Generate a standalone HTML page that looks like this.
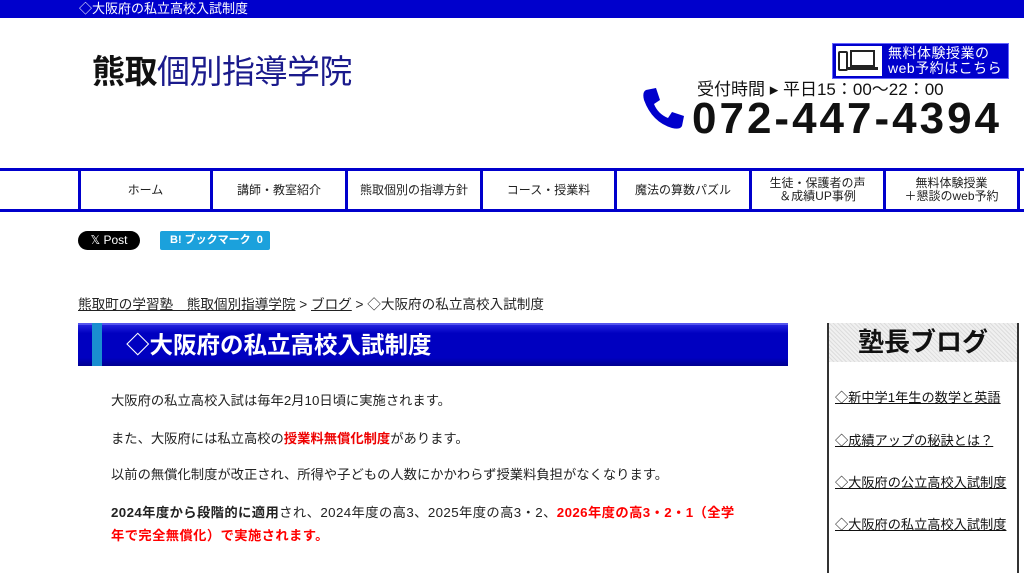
<!DOCTYPE html><html><head><meta charset="utf-8"><style>
*{margin:0;padding:0;box-sizing:border-box}
body{width:1024px;height:565px;overflow:hidden;background:#fff;font-family:"Liberation Sans","Noto Sans CJK JP",sans-serif;color:#222;position:relative}
.a{position:absolute}
.top{left:0;top:0;width:1024px;height:18px;background:#0000cc;color:#fff;font-size:13px;line-height:17px;padding-left:79px}
.nav{left:0;top:168px;width:1024px;height:44px;border-top:3px solid #0000cc;border-bottom:3px solid #0000cc}
.nav div{position:absolute;top:0;height:38px;border-left:3px solid #0000cc;font-size:12px;text-align:center;display:flex;align-items:center;justify-content:center;line-height:13px;color:#222}
p{position:absolute;left:111px;font-size:13.3px;white-space:nowrap}
.r{color:#f00;font-weight:bold}
.side a{position:absolute;left:6px;font-size:13.2px;color:#111;text-decoration:underline;white-space:nowrap}
</style></head><body>
<div class="a top">◇大阪府の私立高校入試制度</div>
<div class="a" style="left:92px;top:51px;font-size:33px;line-height:42px;letter-spacing:-0.5px"><b style="color:#111">熊取</b><span style="color:#1a1a8c">個別指導学院</span></div>
<div class="a" style="left:832px;top:43px;width:177px;height:36px;background:#0000cc;border:1px solid #66f"></div>
<div class="a" style="left:836px;top:46px;width:46px;height:30px;background:#fff"></div>
<svg class="a" style="left:836px;top:46px" width="46" height="30"><rect x="3" y="6" width="8" height="18" rx="1" fill="none" stroke="#222" stroke-width="2"/><rect x="15" y="5" width="23" height="15" fill="none" stroke="#222" stroke-width="2"/><rect x="12" y="21" width="30" height="3" fill="#222"/></svg>
<div class="a" style="left:888px;top:46px;color:#fff;font-size:14px;line-height:15px;letter-spacing:0.5px">無料体験授業の<br>web予約はこちら</div>
<div class="a" style="left:697px;top:80px;font-size:17px;line-height:20px;color:#111;letter-spacing:0px">受付時間 ▸ 平日15：00～22：00</div>
<svg class="a" style="left:640px;top:86px" width="48" height="46"><path d="M6 4 L16 2 L20 14 L14 18 Q18 28 28 32 L32 26 L44 30 L42 40 Q40 44 32 42 Q12 36 4 14 Q2 6 6 4Z" fill="#0000cc"/></svg>
<div class="a" style="left:692px;top:96px;font-size:44px;font-weight:bold;line-height:46px;color:#111;letter-spacing:3px">072-447-4394</div>
<div class="a nav">
<div style="left:78px;width:132px">ホーム</div>
<div style="left:210px;width:135px">講師・教室紹介</div>
<div style="left:345px;width:135px">熊取個別の指導方針</div>
<div style="left:480px;width:134px">コース・授業料</div>
<div style="left:614px;width:135px">魔法の算数パズル</div>
<div style="left:749px;width:134px">生徒・保護者の声<br>＆成績UP事例</div>
<div style="left:883px;width:134px">無料体験授業<br>＋懇談のweb予約</div>
<div style="left:1017px;width:10px"></div>
</div>
<div class="a" style="left:78px;top:231px;width:62px;height:19px;background:#000;border-radius:10px;color:#fff;font-size:12px;line-height:19px;text-align:center">𝕏 Post</div>
<div class="a" style="left:160px;top:231px;width:110px;height:19px;background:#1ba1dc;border-radius:2px;color:#fff;font-size:11px;font-weight:bold;line-height:19px;padding-left:10px">B! ブックマーク&nbsp; 0</div>
<div class="a" style="left:78px;top:293px;font-size:13.6px;color:#222"><u>熊取町の学習塾　熊取個別指導学院</u> &gt; <u>ブログ</u> &gt; ◇大阪府の私立高校入試制度</div>
<div class="a" style="left:78px;top:323px;width:710px;height:43px;background:linear-gradient(#2222dd,#0000c0 20%,#0000c0 80%,#000090);border-top:2px solid #5555ee"></div>
<div class="a" style="left:92px;top:323px;width:10px;height:43px;background:#1a8ed0"></div>
<div class="a" style="left:126px;top:328px;color:#fff;font-size:23.5px;font-weight:bold;line-height:34px">◇大阪府の私立高校入試制度</div>
<p style="top:390px">大阪府の私立高校入試は毎年2月10日頃に実施されます。</p>
<p style="top:428px">また、大阪府には私立高校の<span class="r" style="color:#e00">授業料無償化制度</span>があります。</p>
<p style="top:464px">以前の無償化制度が改正され、所得や子どもの人数にかかわらず授業料負担がなくなります。</p>
<p style="top:501px;line-height:23px;letter-spacing:0.4px"><b>2024年度から段階的に適用</b>され、2024年度の高3、2025年度の高3・2、<span class="r">2026年度の高3・2・1（全学<br>年で完全無償化）で実施されます。</span></p>
<div class="a side" style="left:827px;top:323px;width:192px;height:250px;border-left:2px solid #333;border-right:2px solid #333">
<div style="height:39px;background:repeating-linear-gradient(45deg,#ddd 0 1px,#f0f0f0 1px 3px);text-align:center;font-size:26px;font-weight:bold;line-height:39px;color:#111">塾長ブログ</div>
<a style="top:64px">◇新中学1年生の数学と英語</a>
<a style="top:107px">◇成績アップの秘訣とは？</a>
<a style="top:149px">◇大阪府の公立高校入試制度</a>
<a style="top:191px">◇大阪府の私立高校入試制度</a>
</div>
</body></html>
